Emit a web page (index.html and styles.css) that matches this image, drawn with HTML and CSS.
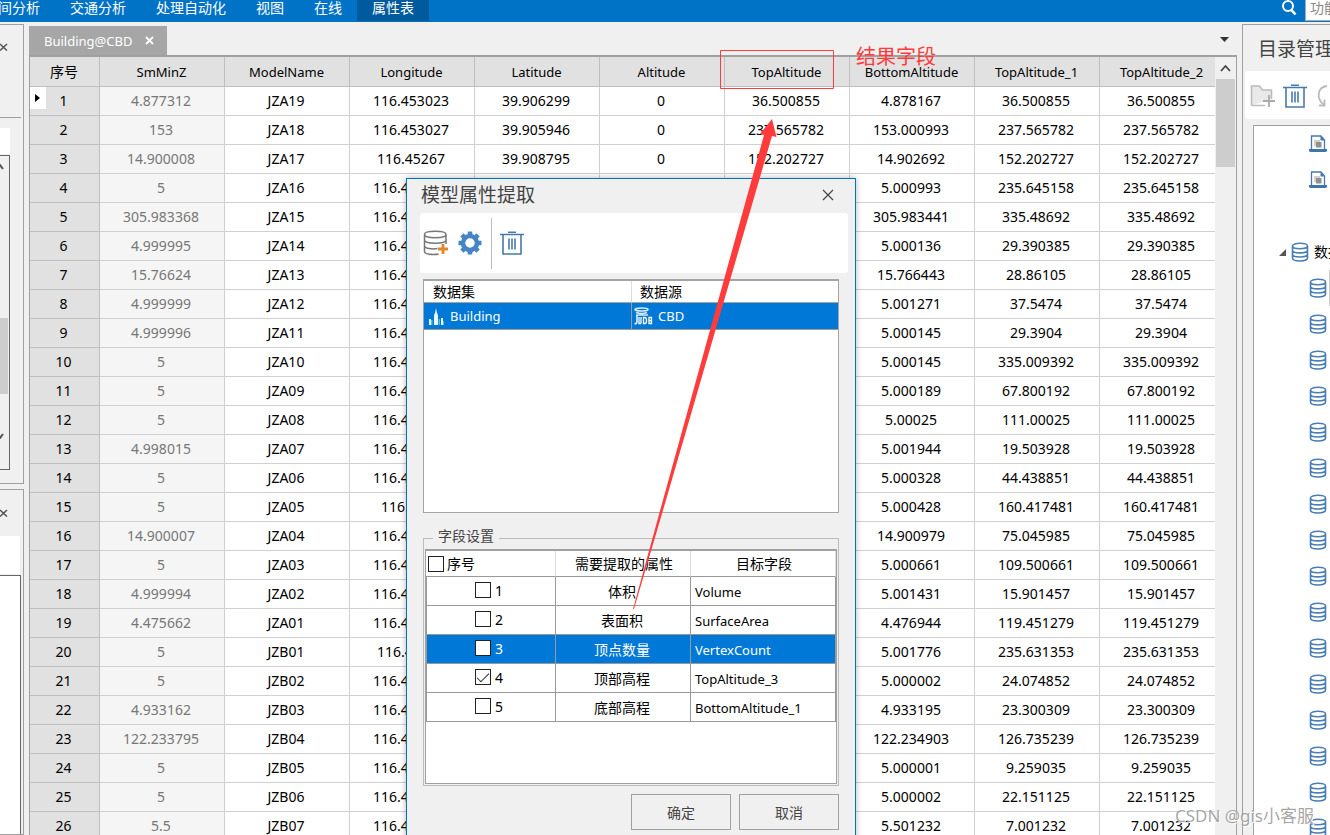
FILE: index.html
```html
<!DOCTYPE html>
<html lang="zh-CN">
<head>
<meta charset="utf-8">
<title>Building@CBD</title>
<link rel="stylesheet" href="styles.css">
</head>
<body>
<svg class="defs" width="0" height="0" aria-hidden="true">
  <symbol id="db" viewBox="0 0 18 20"><path d="M1.500 4v12c0 4 15 4 15 0V4M1.500 4c0 3.600 15 3.600 15 0S1.500.4 1.500 4zM1.500 8.200c0 3.600 15 3.600 15 0M1.500 12.300c0 3.600 15 3.600 15 0" fill="none" stroke="#4a7fb5" stroke-width="1.600"/></symbol>
  <symbol id="trash" viewBox="0 0 24 24"><path d="M0 3.500h24M8 1.200h8M3 4v19h18V4M9 7.500v11M12 7.500v11M15 7.500v11" fill="none" stroke="#4679ad" stroke-width="1.600"/></symbol>
  <symbol id="doc" viewBox="0 0 18 18"><path d="M2.500 14V1h9.500l3.500 4v9" fill="#fff" stroke="#4679ad" stroke-width="1.300"/><path d="M11.500 1l4.500 4.500h-4.500z" fill="#4679ad"/><path d="M0 14h18v1.500q0 1.500-2 1.500H2q-2 0-2-1.500z" fill="#3f75ad"/><path d="M5 5h6v6H5z" fill="#d0d0d0"/><path d="M7 7h5.500v5.500H7z" fill="#909090"/></symbol>
</svg>

<nav class="ribbon">
  <div class="tabs">
    <a href="#">空间分析</a><a href="#">交通分析</a><a href="#">处理自动化</a><a href="#">视图</a><a href="#">在线</a><a href="#" class="active">属性表</a>
  </div>
  <div class="search">
    <svg width="16" height="16" viewBox="0 0 16 16"><circle cx="7" cy="6" r="5" fill="none" stroke="#fff" stroke-width="2"/><path d="M10 9.500l4.500 5" stroke="#fff" stroke-width="2.600"/></svg>
    <input type="text" placeholder="功能搜索" aria-label="功能搜索">
  </div>
</nav>

<div class="workspace">
  <aside class="dock-left">
    <section class="dock upper">
      <button class="close" aria-label="关闭"><svg width="8" height="8" viewBox="0 0 8 8"><path d="M0 1l7 6.500M7 1L0 7.500" stroke="#555" stroke-width="1.500"/></svg></button>
      <div class="strip"></div>
      <div class="list">
        <svg width="8" height="6" viewBox="0 0 8 6"><path d="M-3 5L0 1l3 4" fill="none" stroke="#555" stroke-width="2"/></svg>
        <div class="thumb"></div>
        <svg width="8" height="6" viewBox="0 0 8 6"><path d="M-3 1L0 5l3-4" fill="none" stroke="#555" stroke-width="2"/></svg>
      </div>
    </section>
    <section class="dock lower">
      <button class="close" aria-label="关闭"><svg width="8" height="8" viewBox="0 0 8 8"><path d="M0 1l7 6.500M7 1L0 7.500" stroke="#555" stroke-width="1.500"/></svg></button>
      <div class="strip"></div>
      <div class="page"></div>
    </section>
  </aside>

  <main class="center">
    <div class="doc-tabs">
      <div class="doc-tab"><span>Building@CBD</span>
        <button aria-label="关闭"><svg width="9" height="9" viewBox="0 0 9 9"><path d="M1 1l7 7M8 1L1 8" stroke="#fff" stroke-width="1.800"/></svg></button></div>
      <button class="more" aria-label="更多"><svg width="9" height="5" viewBox="0 0 9 5"><path d="M0 0h9L4.500 5z" fill="#333"/></svg></button>
    </div>
    <div class="grid-area">
      <div class="grid-clip">
        <table class="grid">
          <colgroup><col class="c-no"><col span="9" class="c-val"></colgroup>
          <thead><tr><th class="zh">序号</th><th>SmMinZ</th><th>ModelName</th><th>Longitude</th><th>Latitude</th><th>Altitude</th><th>TopAltitude</th><th>BottomAltitude</th><th>TopAltitude_1</th><th>TopAltitude_2</th></tr></thead>
          <tbody id="rows"></tbody>
        </table>
      </div>
      <div class="scrollbar">
        <svg width="19" height="22" viewBox="0 0 19 22"><path d="M5 14l4.500-5 4.500 5" fill="none" stroke="#444" stroke-width="1.800"/></svg>
        <div class="thumb"></div>
      </div>
    </div>
  </main>

  <aside class="catalog">
    <h2>目录管理器</h2>
    <div class="catalog-tools">
      <svg width="26" height="24" viewBox="0 0 26 24"><path d="M1.500 21.500V2h8l3 4h9v9M1.500 21.500H15" fill="#e9e9e9" stroke="#bbb" stroke-width="1.600"/><path d="M19 11v12M13 17h12" stroke="#aaa" stroke-width="1.800"/></svg>
      <svg width="24" height="24"><use href="#trash"/></svg>
      <svg width="22" height="24" viewBox="0 0 22 24"><path d="M13 2C3 3 2 15 10 20.500M5 21.500h5.500v-6" fill="none" stroke="#bbb" stroke-width="1.800"/></svg>
    </div>
    <ul class="tree" id="tree">
      <li><svg width="18" height="18"><use href="#doc"/></svg></li>
      <li><svg width="18" height="18"><use href="#doc"/></svg></li>
      <li></li>
      <li class="parent"><svg width="7" height="7" viewBox="0 0 7 7"><path d="M7 0v7H0z" fill="#555"/></svg><svg width="18" height="20"><use href="#db"/></svg><span>数据源</span></li>
    </ul>
  </aside>
</div>

<section class="dialog" role="dialog" aria-labelledby="dlg-title">
  <header><h1 id="dlg-title">模型属性提取</h1>
    <button aria-label="关闭"><svg width="12" height="12" viewBox="0 0 12 12"><path d="M1 1l10 10M11 1L1 11" stroke="#444" stroke-width="1.200"/></svg></button></header>
  <div class="toolbar">
    <button aria-label="添加"><svg width="26" height="26" viewBox="0 0 26 26"><path d="M1.500 4.500v17c0 2 4 3 9 3 2 0 4 0 5-.5M23 4.500V14M1.500 4.500c0 4.200 21.500 4.200 21.500 0s-21.500-4.200-21.500 0zM1.500 10c0 4.200 21.500 4.200 21.500 0M1.500 15.500c0 3.200 8 4 13 3" fill="none" stroke="#777" stroke-width="1.500"/><path d="M20 14v10M15 19h10" stroke="#e0862c" stroke-width="2.800"/></svg></button>
    <button aria-label="设置"><svg width="24" height="24" viewBox="0 0 24 24"><circle cx="12" cy="12" r="7" fill="none" stroke="#4685c5" stroke-width="4.500"/><path d="M12 .5v4M12 19.500v4M.5 12h4M19.500 12h4M3.900 3.900l2.800 2.800M17.300 17.300l2.800 2.800M20.100 3.900l-2.800 2.800M6.700 17.300l-2.800 2.800" stroke="#4685c5" stroke-width="4.600"/></svg></button>
    <i></i>
    <button aria-label="删除"><svg width="24" height="26"><use href="#trash"/></svg></button>
  </div>
  <div class="dataset-box">
    <table class="datasets">
      <thead><tr><th>数据集</th><th>数据源</th></tr></thead>
      <tbody><tr>
        <td><div class="cell"><svg width="17" height="18" viewBox="0 0 17 18"><path d="M1 12h2v6H1zM7 6l1-5 1 5 1 2v10H6V8zM13 11h2v7h-2z" fill="#e6f7ff"/><path d="M3 13h1.500v5H3zM10.500 12H12v6h-1.500zM15 14h1v4h-1z" fill="#56bbe6"/></svg>Building</div></td>
        <td><div class="cell"><svg width="19" height="18" viewBox="0 0 19 18"><path d="M1 2.500c0-2 13-2 13 0s-13 2-13 0zM2 5.500q6 2 11 0M2 8h12M3 8v6q0 3-2.500 3" fill="none" stroke="#d7e9f8" stroke-width="1.700"/><path d="M5 10v6.500h2M7 10v6.500M9.500 10.500v6h1.500q1.500 0 1.500-3t-1.500-3zM15 10.500v6h2.500v-3H15h2.500v-3z" fill="none" stroke="#fff" stroke-width="1.300"/></svg>CBD</div></td>
      </tr></tbody>
    </table>
  </div>
  <fieldset>
    <legend>字段设置</legend>
    <div class="field-box">
      <table class="fields">
        <colgroup><col class="f-no"><col class="f-attr"><col></colgroup>
        <thead><tr><th><label><input type="checkbox">序号</label></th><th>需要提取的属性</th><th>目标字段</th></tr></thead>
        <tbody>
          <tr><td><label><input type="checkbox">1</label></td><td>体积</td><td>Volume</td></tr>
          <tr><td><label><input type="checkbox">2</label></td><td>表面积</td><td>SurfaceArea</td></tr>
          <tr class="selected"><td><label><input type="checkbox">3</label></td><td>顶点数量</td><td>VertexCount</td></tr>
          <tr><td><label><input type="checkbox" checked>4</label></td><td>顶部高程</td><td>TopAltitude_3</td></tr>
          <tr><td><label><input type="checkbox">5</label></td><td>底部高程</td><td>BottomAltitude_1</td></tr>
        </tbody>
      </table>
    </div>
  </fieldset>
  <footer><button>确定</button><button>取消</button></footer>
</section>

<svg class="callout" width="240" height="570" viewBox="0 0 240 570"><path d="M100.500 10.500h113v38h-113z" fill="none" stroke="#ff3b3b"/><path d="M152 79l4.500 18-4.500-1L46 460 14 569h-1L43 460 144 95l-4-1z" fill="#ff3b3b"/></svg>
<div class="callout-text">结果字段</div>
<div class="watermark">CSDN @gis小客服</div>
<script src="app.js"></script>
</body>
</html>
```
FILE: styles.css
```css
* { box-sizing: border-box; }
body {
  margin: 0;
  height: 100vh;
  overflow: hidden;
  position: relative;
  display: flex;
  flex-direction: column;
  background: #f0f0f0;
  color: #000;
  font: 14px/18px "Noto Sans", "Noto Sans CJK SC", sans-serif;
}
button { border: 0; background: none; padding: 0; font: inherit; display: flex; align-items: center; justify-content: center; }
svg { display: block; flex: none; }
.defs { position: absolute; }
table { border-collapse: separate; border-spacing: 0; table-layout: fixed; }
th { font-weight: 400; }
th, td { padding: 0; overflow: hidden; white-space: nowrap; }

.ribbon { flex: none; height: 22px; background: #0173c7; display: flex; justify-content: space-between; overflow: hidden; }
.tabs { display: flex; margin-left: -31px; }
.tabs a { height: 21px; padding: 0 15px; color: #fff; text-decoration: none; line-height: 16px; white-space: nowrap; }
.tabs .active { background: #005a9e; }
.search { display: flex; width: 49px; flex: none; gap: 8px; overflow: hidden; }
.search input { flex: none; width: 160px; height: 21px; border: 1px solid #aaa; border-top: 0; padding: 0 4px 5px; font: inherit; }
.search input::placeholder { color: #888; }

.workspace { flex: 1; min-height: 0; display: flex; padding-top: 2px; }
.dock-left { flex: none; width: 24px; display: flex; flex-direction: column; gap: 5px; }
.dock { border: 1px solid #a0a0a0; border-left: 0; display: flex; flex-direction: column; }
.dock .close { align-self: flex-start; height: 44px; }
.dock .strip { background: #fff; flex: none; }
.upper .close { height: 93px; width: 21px; border-bottom: 1px solid #a0a0a0; align-items: flex-start; justify-content: flex-start; padding-top: 18px; }
.upper .strip { height: 26px; width: 10px; margin: 10px 0 1px; }
.upper .list { height: 315px; width: 10px; margin-bottom: 13px; border: 1px solid #666; border-left: 0; padding: 8px 0 30px; display: flex; flex-direction: column; justify-content: space-between; }
.upper .thumb { height: 76px; width: 8px; background: #cdcdcd; margin-top: 108px; }
.lower { flex: 1; }
.lower .close { height: 46px; }
.lower .strip { height: 38px; width: 20px; }
.lower .page { flex: 1; width: 21px; margin-top: 1px; border: 1px solid #666; border-width: 1px 1px 0 0; background: #fff; }

.center { flex: 1; min-width: 0; margin: 2px 5px 0; display: flex; flex-direction: column; }
.doc-tabs { height: 31px; flex: none; display: flex; justify-content: space-between; border-bottom: 2px solid #a0a0a0; }
.doc-tab { display: flex; align-items: center; gap: 13px; padding: 0 13px 0 15px; background: #a6a6a6; color: #fff; font-size: 13px; }
.more { width: 25px; padding-bottom: 3px; }
.grid-area { flex: 1; min-height: 0; display: flex; border: 1px solid #a0a0a0; border-width: 0 1px; }
.grid-clip { flex: 1; min-width: 0; overflow: hidden; background: #fff; }
.grid { width: 1195px; }
.c-no { width: 70px; }
.c-val { width: 125px; }
.grid th { height: 30px; padding-right: 1px; font-size: 13px; background: #e1e1e1; border: solid #bfbfbf; border-width: 0 1px 1px 0; }
.grid .zh { font-size: 14px; }
.grid td { height: 29px; padding-right: 2px; text-align: center; border: solid #d0d0d0; border-width: 0 1px 1px 0; }
.grid td:first-child { background: #e1e1e1; border-color: #bfbfbf; }
.grid td:nth-child(2) { background: #f5f5f5; color: #777; }
.grid td.current { position: relative; }
.marker { position: absolute; left: 0; top: 0; width: 16px; height: 22px; background: #fff; padding: 7px 5px; }
.scrollbar { flex: none; width: 21px; padding: 0 1px; background: #f0f0f0; }
.scrollbar .thumb { height: 88px; background: #cdcdcd; }

.catalog { flex: none; width: 88px; border: 1px solid #a0a0a0; border-width: 1px 0 0 1px; overflow: hidden; display: flex; flex-direction: column; padding-left: 2px; }
.catalog h2 { margin: 0; padding: 11px 0 9px 13px; font-size: 19px; font-weight: 400; line-height: 26px; color: #444; white-space: nowrap; }
.catalog-tools { height: 48px; flex: none; display: flex; align-items: center; gap: 7px; padding: 2px 0 0 5px; background: #fff; border-radius: 3px 0 0 3px; overflow: hidden; }
.tree { flex: 1; min-height: 0; margin: 6px 0 0 8px; padding: 0; list-style: none; border: 1px solid #a0a0a0; border-width: 1px 0 0 1px; background: #fff; overflow: hidden; }
.tree li { height: 36px; padding-left: 55px; display: flex; align-items: center; white-space: nowrap; }
.tree .parent { padding-left: 25px; gap: 5px; }
.tree .hover { border-right: 1px solid #ccc; }

.dialog { position: absolute; left: 406px; top: 178px; width: 450px; padding-bottom: 14px; background: #f0f0f0; border: 1px solid #0173c7; box-shadow: 0 0 6px rgba(0, 0, 0, .3); }
.dialog header { height: 34px; display: flex; justify-content: space-between; align-items: center; padding: 0 21px 2px 14px; }
.dialog h1 { margin: 0; font-size: 19px; font-weight: 400; line-height: 26px; color: #444; }
.toolbar { height: 60px; margin: 0 7px 0 13px; padding-left: 3px; display: flex; align-items: center; gap: 9px; background: #fff; border-radius: 3px; }
.toolbar i { width: 1px; height: 51px; background: #bbb; }
.toolbar i + button { margin-left: -1px; }
.dataset-box { height: 234px; margin: 6px 16px 0; border: 1px solid #a5a5a5; border-top-width: 2px; background: #fff; }
.datasets { width: 100%; }
.datasets th { height: 22px; text-align: left; padding-left: 9px; border-bottom: 1px solid #a5a5a5; }
.datasets th + th { border-left: 1px solid #ddd; padding-left: 8px; }
.datasets td { height: 27px; font-size: 13px; background: #0078d7; color: #fff; border-bottom: 1px solid #999; }
.datasets td + td { border-left: 1px solid #999; }
.cell { display: flex; align-items: center; gap: 5px; padding-left: 2px; }
.datasets td:first-child .cell { padding-left: 4px; }
fieldset { min-width: 0; margin: 14px 16px 0; padding: 0 1px 1px; border: 1px solid #bbb; }
legend { margin-left: 8px; padding: 0 5px 5px; line-height: 17px; color: #444; }
.field-box { height: 235px; border: 1px solid #a0a0a0; border-top-width: 2px; background: #fff; }
.fields { width: 100%; }
.f-no { width: 130px; }
.f-attr { width: 135px; }
.fields th { height: 26px; padding-left: 2px; border: solid #ddd; border-width: 0 1px 0 0; border-bottom: 1px solid #999; }
.fields th:first-child { text-align: left; }
.fields td { height: 29px; padding: 2px 2px 0 0; border: solid #999; border-width: 0 1px 1px 0; text-align: center; vertical-align: middle; }
.fields td:first-child { padding: 0 4px 0 0; border-left-width: 1px; }
.fields td:last-child { text-align: left; padding-left: 4px; font-size: 13px; }
.fields label { display: flex; align-items: center; justify-content: center; gap: 4px; }
.fields th label { justify-content: flex-start; gap: 3px; }
.fields td label { line-height: 22px; align-items: flex-end; }
.fields td input { margin-bottom: 4px; }
.fields .selected td { background: #0078d7; color: #fff; }
input[type="checkbox"] { appearance: none; width: 16px; height: 16px; margin: 0; border: 1px solid #222; background: #fff; display: grid; place-items: center; }
.fields td input[type="checkbox"] { margin-bottom: 4px; }
input[type="checkbox"]:checked::after { content: ""; width: 11px; height: 5px; border: solid #222; border-width: 0 0 1px 1px; transform: rotate(-45deg); margin-bottom: 3px; }
.dialog footer { display: flex; justify-content: flex-end; gap: 8px; padding: 8px 16px 0; }
.dialog footer button { width: 100px; height: 36px; padding-top: 2px; border: 1px solid #a0a0a0; color: #444; }

.callout { position: absolute; left: 620px; top: 40px; pointer-events: none; }
.callout-text { position: absolute; left: 856px; top: 44px; font-size: 20px; line-height: 26px; color: #ff3b3b; }
.watermark { position: absolute; right: 16px; bottom: 7px; font-size: 17px; line-height: 24px; color: rgba(150, 150, 150, .85); text-shadow: 1px 1px 0 #fff; }
```
FILE: app.js
```js
const records = [
  ["4.877312", "JZA19", "116.453023", "39.906299", "0", "36.500855", "4.878167"],
  ["153", "JZA18", "116.453027", "39.905946", "0", "237.565782", "153.000993"],
  ["14.900008", "JZA17", "116.45267", "39.908795", "0", "152.202727", "14.902692"],
  ["5", "JZA16", "116.453027", "", "", "235.645158", "5.000993"],
  ["305.983368", "JZA15", "116.453027", "", "", "335.48692", "305.983441"],
  ["4.999995", "JZA14", "116.453027", "", "", "29.390385", "5.000136"],
  ["15.76624", "JZA13", "116.453027", "", "", "28.86105", "15.766443"],
  ["4.999999", "JZA12", "116.453027", "", "", "37.5474", "5.001271"],
  ["4.999996", "JZA11", "116.453027", "", "", "29.3904", "5.000145"],
  ["5", "JZA10", "116.453027", "", "", "335.009392", "5.000145"],
  ["5", "JZA09", "116.453027", "", "", "67.800192", "5.000189"],
  ["5", "JZA08", "116.453027", "", "", "111.00025", "5.00025"],
  ["4.998015", "JZA07", "116.453027", "", "", "19.503928", "5.001944"],
  ["5", "JZA06", "116.453027", "", "", "44.438851", "5.000328"],
  ["5", "JZA05", "116.4530", "", "", "160.417481", "5.000428"],
  ["14.900007", "JZA04", "116.453027", "", "", "75.045985", "14.900979"],
  ["5", "JZA03", "116.453027", "", "", "109.500661", "5.000661"],
  ["4.999994", "JZA02", "116.453027", "", "", "15.901457", "5.001431"],
  ["4.475662", "JZA01", "116.453027", "", "", "119.451279", "4.476944"],
  ["5", "JZB01", "116.45302", "", "", "235.631353", "5.001776"],
  ["5", "JZB02", "116.453027", "", "", "24.074852", "5.000002"],
  ["4.933162", "JZB03", "116.453027", "", "", "23.300309", "4.933195"],
  ["122.233795", "JZB04", "116.453027", "", "", "126.735239", "122.234903"],
  ["5", "JZB05", "116.453027", "", "", "9.259035", "5.000001"],
  ["5", "JZB06", "116.453027", "", "", "22.151125", "5.000002"],
  ["5.5", "JZB07", "116.453027", "", "", "7.001232", "5.501232"]
];

const body = document.getElementById("rows");
records.forEach((record, index) => {
  const row = body.insertRow();
  [index + 1, ...record, record[5], record[5]].forEach(value => {
    row.insertCell().textContent = value;
  });
});

const current = body.rows[0].cells[0];
current.className = "current";
current.insertAdjacentHTML("beforeend",
  '<span class="marker"><svg width="5" height="8" viewBox="0 0 5 8"><path d="M0 0l5 4-5 4z"/></svg></span>');

const tree = document.getElementById("tree");
for (let i = 0; i < 16; i++) {
  const item = document.createElement("li");
  if (i === 0) item.className = "hover";
  item.innerHTML = '<svg width="18" height="20"><use href="#db"/></svg>';
  tree.append(item);
}
```
